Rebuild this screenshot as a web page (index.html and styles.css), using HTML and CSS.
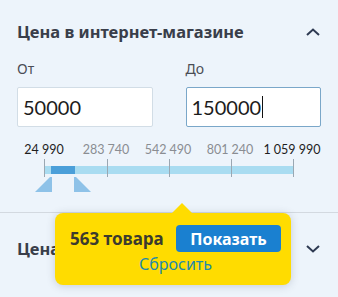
FILE: index.html
```html
<!DOCTYPE html>
<html lang="ru">
<head>
<meta charset="utf-8">
<link rel="stylesheet" href="styles.css">
</head>
<body>
<div class="panel">
  <section class="filter">
    <div class="filter-head">
      <h3 class="filter-title">Цена в интернет-магазине</h3>
      <svg class="chev" width="14" height="8" viewBox="0 0 14 8"><path d="M1 7 L7 1.5 L13 7" fill="none" stroke="#2e3a52" stroke-width="2"/></svg>
    </div>
    <div class="range-fields">
      <label class="field">
        <span class="field-label">От</span>
        <span class="field-input">50000</span>
      </label>
      <label class="field">
        <span class="field-label">До</span>
        <span class="field-input active">150000<span class="caret"></span></span>
      </label>
    </div>
    <div class="scale">
      <span class="scale-mark edge">24 990</span>
      <span class="scale-mark">283 740</span>
      <span class="scale-mark">542 490</span>
      <span class="scale-mark">801 240</span>
      <span class="scale-mark edge">1 059 990</span>
    </div>
    <svg class="slider" width="338" height="40" viewBox="0 0 338 40">
      <rect x="44" y="9" width="249" height="8" fill="#a9dcf1"/>
      <rect x="51" y="9" width="24" height="8" fill="#4b9fd9"/>
      <g stroke="#9aa7b2" stroke-width="1">
        <line x1="44.5" y1="2" x2="44.5" y2="20"/>
        <line x1="107.5" y1="2" x2="107.5" y2="20"/>
        <line x1="169.5" y1="2" x2="169.5" y2="20"/>
        <line x1="231.5" y1="2" x2="231.5" y2="20"/>
        <line x1="293.5" y1="2" x2="293.5" y2="20"/>
      </g>
      <polygon points="50,20 52,20 52,35 35,35" fill="#8ec2e8"/>
      <polygon points="74,20 76,20 91,35 74,35" fill="#8ec2e8"/>
    </svg>
  </section>
  <section class="filter second">
    <div class="filter-head">
      <h3 class="filter-title">Цена</h3>
      <svg class="chev" width="14" height="8" viewBox="0 0 14 8"><path d="M1 1 L7 6.5 L13 1" fill="none" stroke="#2e3a52" stroke-width="2"/></svg>
    </div>
  </section>
  <div class="popup">
    <div class="popup-row">
      <span class="popup-count">563 товара</span>
      <button class="popup-btn">Показать</button>
    </div>
    <a class="popup-reset">Сбросить</a>
  </div>
</div>
</body>
</html>
```
FILE: styles.css
```css
* { box-sizing: border-box; }
html, body { margin: 0; padding: 0; }
body {
  background: #edf4fb;
  width: 338px;
  height: 297px;
  overflow: hidden;
  font-family: "Noto Sans", sans-serif;
}
.panel { position: relative; }
.filter { padding: 0 17px; }
.filter:first-child { padding-top: 20px; border-bottom: 1px solid #d3d9e0; height: 213px; }
.filter-head {
  display: flex;
  align-items: center;
  justify-content: space-between;
  height: 24px;
}
.filter-title {
  margin: 0;
  font-size: 16.5px;
  font-weight: 700;
  color: #393e4a;
  line-height: 24px;
}
.chev { margin-right: 1px; }
.range-fields {
  display: grid;
  grid-template-columns: 1fr 1fr;
  column-gap: 33px;
  margin-top: 17px;
}
.field { display: flex; flex-direction: column; }
.field-label {
  font-size: 14px;
  line-height: 16px;
  color: #4a4d55;
  margin-bottom: 10px;
}
.field-input {
  display: flex;
  align-items: center;
  height: 40px;
  padding-left: 5px;
  background: #fff;
  border: 1px solid #d2dde6;
  border-radius: 2px;
  font-family: Lato, sans-serif;
  font-size: 20px;
  color: #1c1c1c;
}
.field-input.active { border-color: #7aa7c9; }
.caret { display: inline-block; width: 1px; height: 22px; background: #111; margin-left: 1px; }
.scale {
  display: grid;
  grid-template-columns: repeat(5, 62px);
  margin: 16px 0 0 -4px;
}
.scale-mark {
  text-align: center;
  font-family: Lato, sans-serif;
  font-size: 12.5px;
  line-height: 14px;
  color: #8a8d92;
  white-space: nowrap;
}
.scale-mark.edge { color: #1e1e1e; }
.slider { display: block; margin: 0 0 0 -17px; }
.second .filter-head { height: 72px; }
.popup {
  position: absolute;
  left: 55px;
  top: 213px;
  width: 236px;
  height: 72px;
  background: #ffdc00;
  border-radius: 8px;
  box-shadow: 0 1px 8px rgba(60, 70, 80, 0.22);
  padding: 12px 10px 0 15px;
  display: flex;
  flex-direction: column;
  align-items: center;
}
.popup::before {
  content: "";
  position: absolute;
  left: 117px;
  top: -10px;
  border-left: 10px solid transparent;
  border-right: 10px solid transparent;
  border-bottom: 10px solid #ffdc00;
}
.popup-row {
  display: flex;
  align-items: center;
  justify-content: space-between;
  width: 100%;
}
.popup-count {
  font-size: 17px;
  font-weight: 700;
  color: #3b3b2e;
}
.popup-btn {
  width: 105px;
  height: 27px;
  border: 0;
  border-radius: 4px;
  background: #1a80d0;
  color: #fff;
  font-family: "Noto Sans", sans-serif;
  font-size: 16px;
  font-weight: 700;
  padding: 0;
}
.popup-reset {
  margin-top: 2px;
  font-size: 16px;
  color: #1f8aab;
  line-height: 20px;
}
```
